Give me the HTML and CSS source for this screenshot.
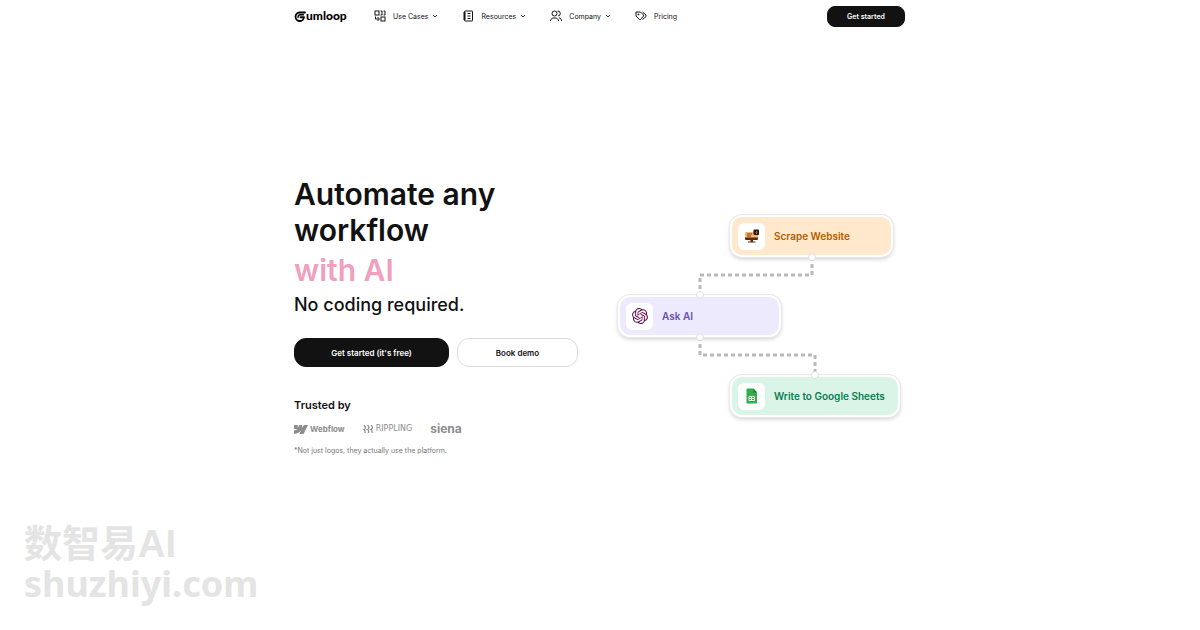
FILE: index.html
```html
<!DOCTYPE html>
<html lang="en">
<head>
    <meta charset="UTF-8">
    <meta name="viewport" content="width=device-width, initial-scale=1.0">
    <title>Gumloop</title>
    <link rel="stylesheet" href="styles.css">
</head>
<body>

    <header class="header">
        <a href="#" class="logo">
            <svg class="logo-mark" viewBox="0 0 24 22" fill="none" stroke="currentColor" stroke-width="3.600" stroke-linecap="round" stroke-linejoin="round">
                <path d="M22 3 H11 A8.500 8.500 0 1 0 20 12.500 H13"/>
                <path d="M19 7.500 H12 a5 5 0 0 0 -4 5.500" stroke-width="2.600"/>
            </svg>
            <span class="logo-text">umloop</span>
        </a>

        <nav class="nav">
            <a href="#" class="nav-link">
                <svg class="nav-icon" viewBox="0 0 24 24">
                    <rect x="2" y="2" width="8" height="8"/>
                    <path d="M13 2h3v8h-3M19 2h3v8h-3M3 13v5h7M7 14l4 4-4 4"/>
                    <rect x="14" y="14" width="8" height="8"/>
                </svg>
                <span>Use Cases</span>
                <svg class="chevron" viewBox="0 0 12 12"><path d="M2 4l4 4 4-4"/></svg>
            </a>
            <a href="#" class="nav-link">
                <svg class="nav-icon" viewBox="0 0 24 24">
                    <rect x="5" y="2" width="16" height="20" rx="1"/>
                    <path d="M2 6h6M2 10h6M2 14h6M2 18h6M11 7h6M11 12h6M11 17h6"/>
                </svg>
                <span>Resources</span>
                <svg class="chevron" viewBox="0 0 12 12"><path d="M2 4l4 4 4-4"/></svg>
            </a>
            <a href="#" class="nav-link">
                <svg class="nav-icon" viewBox="0 0 24 24">
                    <circle cx="9" cy="7" r="5"/>
                    <path d="M1 22v-2l4-4h8l4 4v2M15 2a5 5 0 0 1 1 10M18 15l5 4v3"/>
                </svg>
                <span>Company</span>
                <svg class="chevron" viewBox="0 0 12 12"><path d="M2 4l4 4 4-4"/></svg>
            </a>
            <a href="#" class="nav-link">
                <svg class="nav-icon" viewBox="0 0 24 24">
                    <path d="M2 4v8l7 7h2l6-7v-2l-6-6zM15 4l7 6v3l-7 6"/>
                    <circle cx="7" cy="9" r="1"/>
                </svg>
                <span>Pricing</span>
            </a>
        </nav>

        <button class="btn btn-dark btn-small">Get started</button>
    </header>

    <main class="hero">
        <section class="intro">
            <h1>Automate any workflow <span class="pink">with AI</span></h1>
            <h2>No coding required.</h2>

            <div class="actions">
                <button class="btn btn-dark btn-wide">Get started (it's free)</button>
                <button class="btn btn-light">Book demo</button>
            </div>

            <h3>Trusted by</h3>
            <div class="brands">
                <span class="brand webflow">
                    <svg viewBox="0 0 28 18" fill="currentColor">
                        <path d="M28 0 L19 18 H10.600 L14.400 10.700 C11.300 14.800 6.600 17.500 0 18 V10.800 C0 10.800 4.200 10.600 6.700 8 H0 V0 H7.500 V6.200 L10.600 0 H16.300 V6.100 L19.500 0 Z"/>
                    </svg>
                    Webflow
                </span>
                <span class="brand rippling">
                    <svg viewBox="0 0 22 16" fill="none" stroke="currentColor" stroke-width="2.500">
                        <path d="M2 0 q4 4 2 7 q-1 2 -2 2 q3 2 2 7 M9 0 q4 4 2 7 q-1 2 -2 2 q3 2 2 7 M16 0 q4 4 2 7 q-1 2 -2 2 q3 2 2 7"/>
                    </svg>
                    RIPPLING
                </span>
                <span class="brand siena">siena</span>
            </div>
            <p class="note">*Not just logos, they actually use the platform.</p>
        </section>

        <!-- workflow canvas -->
        <section class="canvas">
            <svg class="wires" viewBox="0 0 288 206">
                <path d="M194 43 V61 H82 V80"/>
                <path d="M82 123 V141 H197 V161"/>
            </svg>

            <div class="node node-scrape">
                <span class="node-icon">
                    <svg viewBox="0 0 32 30">
                        <rect x="2" y="7" width="26" height="15" rx="2" fill="#f5b673"/>
                        <path d="M2 18h26v3a2 2 0 0 1-2 2H4a2 2 0 0 1-2-2z" fill="#5a2d0c"/>
                        <path d="M13 23h5v3h5v2H8v-2h5z" fill="#5a2d0c"/>
                        <path d="M6 11h10M6 15h8" stroke="#7a3d10" stroke-width="2"/>
                        <rect x="19" y="2" width="11" height="11" rx="2" fill="#2b1608"/>
                        <path d="M25 5v5M23 8l2 2 2-2" stroke="#f5b673" stroke-width="1" fill="none"/>
                    </svg>
                </span>
                Scrape Website
                <i class="port port-bottom"></i>
            </div>

            <div class="node node-ask">
                <span class="node-icon">
                    <svg viewBox="0 0 24 24" fill="#6b1152">
                        <path d="M22.282 9.821a5.985 5.985 0 0 0-.516-4.910 6.046 6.046 0 0 0-6.510-2.900A6.065 6.065 0 0 0 4.981 4.182a5.985 5.985 0 0 0-3.998 2.900 6.046 6.046 0 0 0 .743 7.097 5.980 5.980 0 0 0 .511 4.911 6.051 6.051 0 0 0 6.515 2.900A5.985 5.985 0 0 0 13.260 24a6.056 6.056 0 0 0 5.772-4.206 5.990 5.990 0 0 0 3.998-2.900 6.056 6.056 0 0 0-.748-7.073zM13.260 22.430a4.476 4.476 0 0 1-2.876-1.041l.141-.080 4.779-2.758a.795.795 0 0 0 .392-.681v-6.737l2.020 1.169a.071.071 0 0 1 .038.052v5.583a4.504 4.504 0 0 1-4.494 4.493zM3.600 18.304a4.471 4.471 0 0 1-.535-3.014l.142.085 4.783 2.759a.771.771 0 0 0 .781 0l5.843-3.369v2.332a.080.080 0 0 1-.033.062L9.740 19.950a4.499 4.499 0 0 1-6.140-1.646zM2.341 7.896a4.485 4.485 0 0 1 2.365-1.973V11.600a.766.766 0 0 0 .388.677l5.815 3.354-2.020 1.169a.076.076 0 0 1-.071 0l-4.830-2.787A4.504 4.504 0 0 1 2.341 7.872zm16.596 3.856l-5.833-3.388L15.119 7.200a.076.076 0 0 1 .071 0l4.830 2.791a4.494 4.494 0 0 1-.676 8.105v-5.678a.790.790 0 0 0-.407-.667zm2.010-3.023l-.141-.085-4.774-2.782a.776.776 0 0 0-.785 0L9.409 9.230V6.897a.066.066 0 0 1 .028-.061l4.830-2.787a4.499 4.499 0 0 1 6.680 4.660zm-12.640 4.135l-2.020-1.164a.080.080 0 0 1-.038-.057V6.075a4.499 4.499 0 0 1 7.376-3.454l-.142.081L8.704 5.460a.795.795 0 0 0-.393.681zm1.097-2.365l2.602-1.500 2.607 1.500v2.999l-2.597 1.500-2.607-1.500z"/>
                    </svg>
                </span>
                Ask AI
                <i class="port port-top"></i>
                <i class="port port-bottom"></i>
            </div>

            <div class="node node-sheets">
                <span class="node-icon">
                    <svg viewBox="0 0 32 32">
                        <path d="M7 1h12l7 8v20a2 2 0 0 1-2 2H7a2 2 0 0 1-2-2V3a2 2 0 0 1 2-2z" fill="#2bb14c"/>
                        <path d="M19 1l7 8h-7z" fill="#17803a"/>
                        <path d="M10 17h11v8H10zM10 21h11M15 17v8" fill="none" stroke="#e9f9ee" stroke-width="2"/>
                    </svg>
                </span>
                Write to Google Sheets
                <i class="port port-top"></i>
            </div>
        </section>
    </main>

    <footer class="watermark">
        <div class="watermark-name">数智易AI</div>
        <div class="watermark-site">shuzhiyi.com</div>
    </footer>

</body>
</html>
```
FILE: styles.css
```css
* {
    box-sizing: border-box;
}
body {
    margin: 0;
    min-height: 100vh;
    display: flex;
    flex-direction: column;
    background-color: #fff;
    color: #121212;
    font-family: Inter, "Liberation Sans", sans-serif;
}
h1, h2, h3, p {
    margin: 0;
}
a {
    color: inherit;
    text-decoration: none;
}
.header, .hero {
    width: 100%;
    max-width: 612px;
    margin: 0 auto;
}

/* header */
.header {
    display: flex;
    align-items: center;
    height: 32px;
}
.logo {
    display: flex;
    align-items: center;
    width: 80px;
    color: #000;
}
.logo-mark {
    width: 12px;
    height: 11px;
}
.logo-text {
    font-family: Lato, sans-serif;
    font-size: 12px;
    line-height: 16px;
    font-weight: 900;
}
.nav {
    display: flex;
    gap: 24px;
    font-size: 7px;
    line-height: 13px;
}
.nav-link {
    display: flex;
    align-items: center;
}
.nav-icon {
    width: 12px;
    height: 12px;
    margin-right: 7px;
    fill: none;
    stroke: #121212;
    stroke-width: 2;
}
.chevron {
    width: 6px;
    height: 6px;
    margin-left: 4px;
    fill: none;
    stroke: #333;
    stroke-width: 2;
}

/* buttons */
.btn {
    padding: 0;
    border: 1px solid #121212;
    border-radius: 12px;
    font-family: inherit;
    font-size: 8px;
    font-weight: 600;
    cursor: pointer;
}
.btn-dark {
    background-color: #121212;
    color: #fff;
}
.btn-light {
    width: 121px;
    height: 29px;
    border-color: #ddd;
    background-color: #fff;
    color: #121212;
}
.btn-wide {
    width: 155px;
    height: 29px;
}
.btn-small {
    width: 78px;
    height: 21px;
    margin-left: auto;
    margin-right: 1px;
    border-radius: 8px;
    font-size: 7px;
}

/* hero */
.hero {
    flex: 1;
    display: flex;
    justify-content: space-between;
    align-items: flex-start;
    padding-top: 144px;
}
.intro {
    width: 290px;
}
h1 {
    max-width: 240px;
    font-size: 30px;
    line-height: 36px;
    font-weight: 600;
}
.pink {
    display: block;
    margin-top: 4px;
    color: #f09fc0;
}
h2 {
    margin-top: 5px;
    font-size: 18px;
    line-height: 24px;
    font-weight: 500;
}
.actions {
    display: flex;
    gap: 8px;
    margin-top: 21px;
}
h3 {
    margin-top: 30px;
    font-size: 11px;
    line-height: 16px;
    font-weight: 600;
}
.brands {
    display: flex;
    align-items: center;
    gap: 18px;
    height: 16px;
    margin-top: 8px;
    color: #8c8c8c;
}
.brand {
    display: flex;
    align-items: center;
    gap: 2px;
    font-size: 8px;
    line-height: 16px;
}
.webflow {
    font-weight: 700;
}
.webflow svg {
    width: 14px;
    height: 9px;
}
.rippling {
    font-family: "DejaVu Sans", sans-serif;
}
.rippling svg {
    width: 11px;
    height: 8px;
}
.siena {
    font-size: 12px;
    font-weight: 700;
}
.note {
    margin-top: 9px;
    color: #777;
    font-size: 7px;
    line-height: 10px;
}

/* workflow canvas */
.canvas {
    position: relative;
    width: 288px;
    height: 206px;
    margin-top: 38px;
}
.wires {
    display: block;
    width: 288px;
    height: 206px;
    fill: none;
    stroke: #b9b9b9;
    stroke-width: 3;
    stroke-dasharray: 4 3;
}
.node {
    position: absolute;
    display: flex;
    align-items: center;
    gap: 9px;
    width: 163px;
    height: 42px;
    padding-left: 6px;
    border: 2px solid #fff;
    border-radius: 12px;
    box-shadow: 0 0 0 1px #e8e8e8, 0 2px 4px rgba(0, 0, 0, 0.2);
    font-size: 10px;
    line-height: 16px;
    font-weight: 600;
    white-space: nowrap;
}
.node-scrape {
    left: 112px;
    top: 1px;
    background-color: #ffe8cc;
    color: #b35c00;
}
.node-ask {
    left: 0;
    top: 81px;
    background-color: #eeeafe;
    color: #6550b0;
}
.node-sheets {
    left: 112px;
    top: 161px;
    width: 170px;
    background-color: #daf4e7;
    color: #0b7d50;
}
.node-icon {
    display: flex;
    align-items: center;
    justify-content: center;
    width: 27px;
    height: 27px;
    border-radius: 6px;
    background-color: #fff;
}
.node-icon svg {
    width: 16px;
    height: 16px;
}
.port {
    position: absolute;
    left: 50%;
    width: 8px;
    height: 8px;
    margin-left: -4px;
    border: 1px solid #ddd;
    border-radius: 50%;
    background-color: #fff;
}
.port-top {
    top: -6px;
}
.port-bottom {
    bottom: -6px;
}

/* watermark */
.watermark {
    padding: 0 24px 26px;
    color: #e4e4e4;
    font-weight: 700;
}
.watermark-name {
    font-family: "Liberation Sans", "Noto Sans CJK SC", sans-serif;
    font-size: 38px;
    line-height: 40px;
}
.watermark-site {
    font-family: "Noto Sans", sans-serif;
    font-size: 36px;
    line-height: 40px;
}
```
